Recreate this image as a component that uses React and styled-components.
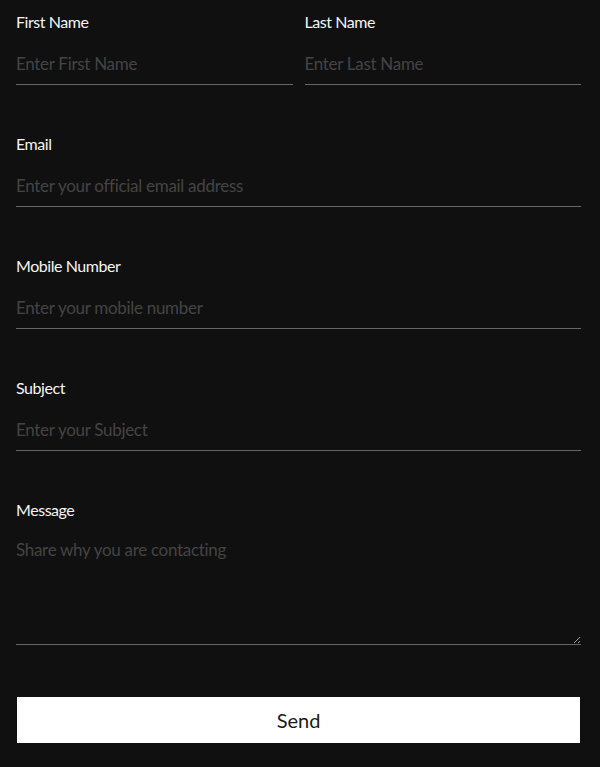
import React from "react";
import styled, { createGlobalStyle } from "styled-components";

const Global = createGlobalStyle`
  html, body { margin: 0; padding: 0; background: #101010; }
  body { font-family: Lato, "Open Sans", sans-serif; }
  * { box-sizing: border-box; }
`;

const Form = styled.form`
  display: flex;
  flex-direction: column;
  padding: 12px 19px 23px 16px;
  background: #101010;
  min-height: 767px;
`;

const Row = styled.div`
  display: grid;
  grid-template-columns: 1fr 1fr;
  gap: 12px;
`;

const Field = styled.div`
  display: flex;
  flex-direction: column;
  margin-bottom: ${(p) => (p.$last ? 51 : 49)}px;
`;

const Label = styled.label`
  font-size: 16px;
  line-height: 20px;
  height: 20px;
  color: #f4f4f4;
  letter-spacing: -0.45px;
`;

const Input = styled.input`
  margin-top: 10px;
  height: 43px;
  padding: 0;
  background: transparent;
  border: none;
  border-bottom: 1px solid #666;
  color: #ddd;
  font-family: inherit;
  font-size: 17px;
  letter-spacing: -0.3px;
  outline: none;
  &::placeholder { color: #444; }
`;

const TextArea = styled.textarea`
  margin-top: 10px;
  height: 115px;
  padding: 10px 0 0;
  background: transparent;
  border: none;
  border-bottom: 1px solid #666;
  color: #ddd;
  font-family: inherit;
  font-size: 17px;
  line-height: 20px;
  letter-spacing: -0.3px;
  outline: none;
  resize: vertical;
  &::placeholder { color: #444; }
`;

const Button = styled.button`
  height: 48px;
  background: #fff;
  border: 1px solid #101010;
  color: #1a1a1a;
  font-family: inherit;
  font-size: 20px;
  font-weight: 400;
  cursor: pointer;
`;

export default function App() {
  return (
    <>
      <Global />
      <Form onSubmit={(e) => e.preventDefault()}>
        <Row>
          <Field>
            <Label>First Name</Label>
            <Input placeholder="Enter First Name" />
          </Field>
          <Field>
            <Label>Last Name</Label>
            <Input placeholder="Enter Last Name" />
          </Field>
        </Row>
        <Field>
          <Label>Email</Label>
          <Input placeholder="Enter your official email address" />
        </Field>
        <Field>
          <Label>Mobile Number</Label>
          <Input placeholder="Enter your mobile number" />
        </Field>
        <Field>
          <Label>Subject</Label>
          <Input placeholder="Enter your Subject" />
        </Field>
        <Field $last>
          <Label>Message</Label>
          <TextArea placeholder="Share why you are contacting" />
        </Field>
        <Button type="submit">Send</Button>
      </Form>
    </>
  );
}
